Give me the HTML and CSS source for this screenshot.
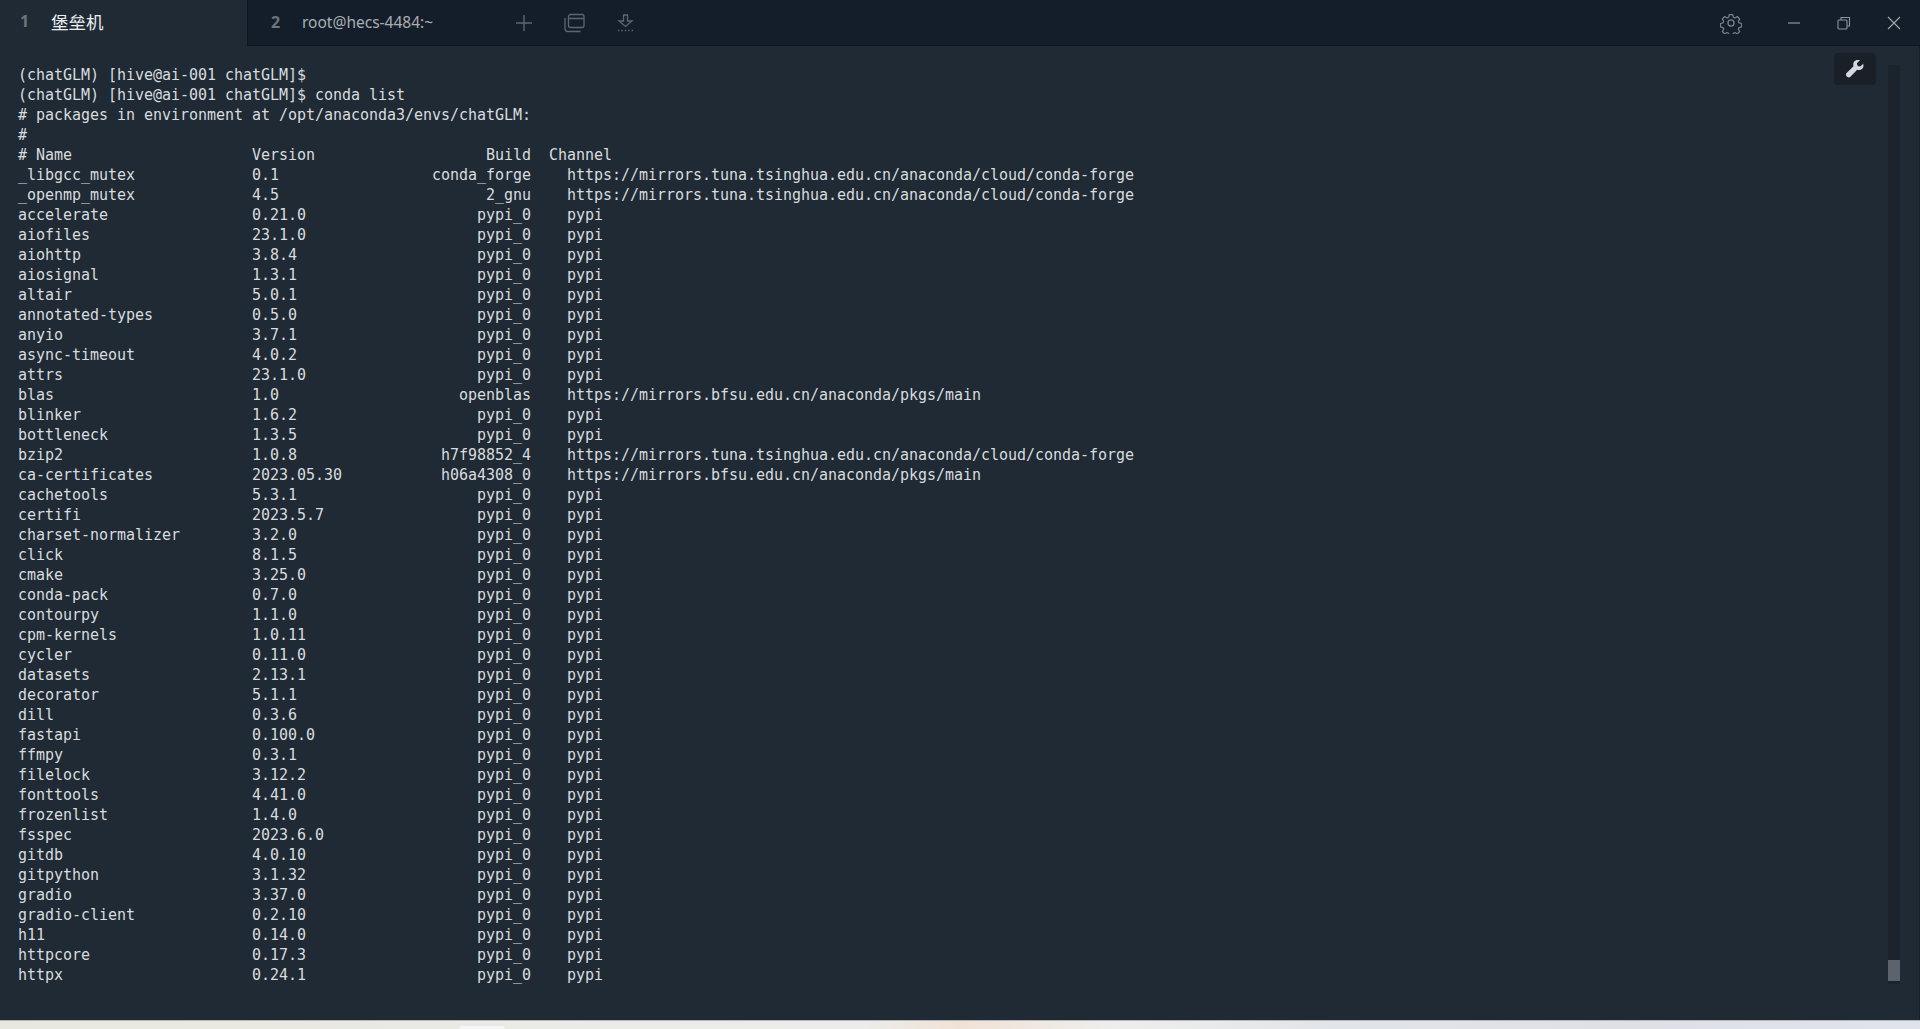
FILE: index.html
```html
<!DOCTYPE html>
<html lang="zh-CN">
<head>
    <meta charset="UTF-8">
    <title>堡垒机</title>
    <link rel="stylesheet" href="styles.css">
</head>
<body>
    <header class="tabbar">
        <div class="tab active"><span class="tab-num">1</span><span class="tab-name">堡垒机</span></div>
        <div class="tab"><span class="tab-num">2</span><span class="tab-name">root@hecs-4484:~</span></div>
        <div class="tab-tools">
            <svg width="18" height="18" viewBox="0 0 18 18" fill="none" stroke="#5d656e" stroke-width="1.4"><path d="M9 1v16M1 9h16"/></svg>
            <svg width="22" height="20" viewBox="0 0 22 20" fill="none" stroke="#5d656e" stroke-width="1.3"><rect x="4.500" y="1.500" width="15.500" height="13" rx="2"/><path d="M4.500 5.500H20M1 5v10.500a3 3 0 0 0 3 3h12.500"/></svg>
            <svg width="18" height="20" viewBox="0 0 18 20" fill="none" stroke="#5d656e" stroke-width="1.3"><path d="M6.500 2h4v6h4.500l-6.500 5.500L2 8h4.500z"/><path d="M1 17.500h15" stroke-width="1.400" stroke-dasharray="1.400 2"/></svg>
        </div>
        <div class="window-tools">
            <svg class="gear" width="22" height="22" viewBox="0 0 24 24" fill="none" stroke="#7b8289" stroke-width="1.400" stroke-linejoin="round"><circle cx="12" cy="12" r="3.300"/><path d="M10 1.500h4l.7 3 1.900.8 2.600-1.600 2.800 2.800-1.600 2.600.8 1.900 3 .7v4l-3 .7-.8 1.900 1.600 2.600-2.800 2.800-2.600-1.600-1.900.8-.7 3h-4l-.7-3-1.900-.8-2.600 1.600-2.800-2.800 1.600-2.600-.8-1.900-3-.7v-4l3-.7.8-1.900-1.600-2.600 2.800-2.800 2.600 1.600 1.900-.8z" transform="translate(.6 1.400) scale(.95)"/></svg>
            <svg width="14" height="14" viewBox="0 0 14 14" fill="none" stroke="#8d9399" stroke-width="1.200"><path d="M1 7h12"/></svg>
            <svg width="14" height="14" viewBox="0 0 14 14" fill="none" stroke="#8d9399" stroke-width="1.100"><rect x="1" y="4" width="9" height="9" rx="1"/><path d="M4 4V1.500h8.500V10H10"/></svg>
            <svg width="14" height="14" viewBox="0 0 14 14" fill="none" stroke="#a3a8ad" stroke-width="1.100"><path d="M1 1l12 12M13 1L1 13"/></svg>
        </div>
    </header>

    <main class="terminal">
        <pre class="output">(chatGLM) [hive@ai-001 chatGLM]$
(chatGLM) [hive@ai-001 chatGLM]$ conda list
# packages in environment at /opt/anaconda3/envs/chatGLM:
#
# Name                    Version                   Build  Channel
_libgcc_mutex             0.1                 conda_forge    https://mirrors.tuna.tsinghua.edu.cn/anaconda/cloud/conda-forge
_openmp_mutex             4.5                       2_gnu    https://mirrors.tuna.tsinghua.edu.cn/anaconda/cloud/conda-forge
accelerate                0.21.0                   pypi_0    pypi
aiofiles                  23.1.0                   pypi_0    pypi
aiohttp                   3.8.4                    pypi_0    pypi
aiosignal                 1.3.1                    pypi_0    pypi
altair                    5.0.1                    pypi_0    pypi
annotated-types           0.5.0                    pypi_0    pypi
anyio                     3.7.1                    pypi_0    pypi
async-timeout             4.0.2                    pypi_0    pypi
attrs                     23.1.0                   pypi_0    pypi
blas                      1.0                    openblas    https://mirrors.bfsu.edu.cn/anaconda/pkgs/main
blinker                   1.6.2                    pypi_0    pypi
bottleneck                1.3.5                    pypi_0    pypi
bzip2                     1.0.8                h7f98852_4    https://mirrors.tuna.tsinghua.edu.cn/anaconda/cloud/conda-forge
ca-certificates           2023.05.30           h06a4308_0    https://mirrors.bfsu.edu.cn/anaconda/pkgs/main
cachetools                5.3.1                    pypi_0    pypi
certifi                   2023.5.7                 pypi_0    pypi
charset-normalizer        3.2.0                    pypi_0    pypi
click                     8.1.5                    pypi_0    pypi
cmake                     3.25.0                   pypi_0    pypi
conda-pack                0.7.0                    pypi_0    pypi
contourpy                 1.1.0                    pypi_0    pypi
cpm-kernels               1.0.11                   pypi_0    pypi
cycler                    0.11.0                   pypi_0    pypi
datasets                  2.13.1                   pypi_0    pypi
decorator                 5.1.1                    pypi_0    pypi
dill                      0.3.6                    pypi_0    pypi
fastapi                   0.100.0                  pypi_0    pypi
ffmpy                     0.3.1                    pypi_0    pypi
filelock                  3.12.2                   pypi_0    pypi
fonttools                 4.41.0                   pypi_0    pypi
frozenlist                1.4.0                    pypi_0    pypi
fsspec                    2023.6.0                 pypi_0    pypi
gitdb                     4.0.10                   pypi_0    pypi
gitpython                 3.1.32                   pypi_0    pypi
gradio                    3.37.0                   pypi_0    pypi
gradio-client             0.2.10                   pypi_0    pypi
h11                       0.14.0                   pypi_0    pypi
httpcore                  0.17.3                   pypi_0    pypi
httpx                     0.24.1                   pypi_0    pypi</pre>
        <button class="wrench">
            <svg width="20" height="20" viewBox="0 0 20 20"><path fill="#d5d9de" d="M18.500 4.500l-3.200 3-2.700-.6-.7-2.700 3.100-3C12.800.5 10.800 1 9.500 2.300 8.200 3.600 8 5.500 8.500 7.200L1.600 14c-.9.900-.9 2.300 0 3.200l.6.500c.9.900 2.300.9 3.200 0l6.800-6.900c1.700.6 3.700.3 5-1 1.300-1.300 1.700-3.500.8-5.300z"/></svg>
        </button>
        <div class="scrollbar"><div class="scrollbar-thumb"></div></div>
    </main>
    <footer class="desktop-strip"><div class="strip-notch"></div></footer>
</body>
</html>
```

FILE: styles.css
```css
html, body {
    height: 100%;
    overflow: hidden;
}
body {
    margin: 0;
    display: flex;
    flex-direction: column;
    background: #1f2a35;
    font-family: 'Noto Sans', 'Noto Sans CJK SC', sans-serif;
}
.tabbar {
    display: flex;
    align-items: stretch;
    height: 46px;
    box-sizing: border-box;
    flex-shrink: 0;
    background: #141e2a;
    border-bottom: 1px solid #0e151d;
}
.tab {
    width: 248px;
    display: flex;
    align-items: center;
    padding: 0 0 2px 23px;
    box-sizing: border-box;
    color: #a9aeb3;
    font-size: 15.500px;
}
.tab.active {
    padding: 0 0 4px 20px;
    background: #1f2a35;
    color: #eceef0;
    margin-bottom: -1px;
    font-size: 17.500px;
    border-right: 1px solid #0e151d;
}
.tab-num {
    width: 31px;
    font-size: 16px;
    font-weight: bold;
    color: #6d747b;
}
.tab-tools {
    display: flex;
    align-items: center;
    gap: 31px;
    margin-left: 19px;
}
.window-tools {
    margin-left: auto;
    display: flex;
    align-items: center;
    gap: 36px;
    padding-right: 19px;
}
.gear {
    margin-right: 9px;
}
.terminal {
    flex: 1;
    position: relative;
    padding: 19px 0 0 18px;
    border-right: 1px solid #171f28;
}
.output {
    margin: 0;
    font-family: 'DejaVu Sans Mono', monospace;
    font-size: 15px;
    letter-spacing: -0.03px;
    line-height: 20px;
    color: #d9dcdf;
}
.wrench {
    position: absolute;
    top: 7px;
    right: 43px;
    width: 42px;
    height: 32px;
    display: flex;
    align-items: center;
    justify-content: center;
    padding: 0;
    border: none;
    border-radius: 4px;
    background: #1a2028;
}
.scrollbar {
    position: absolute;
    top: 19px;
    right: 19px;
    width: 12px;
    height: 919px;
    background: #1b242d;
}
.scrollbar-thumb {
    position: absolute;
    bottom: 3px;
    left: 0;
    width: 100%;
    height: 21px;
    background: #5b646c;
}
.desktop-strip {
    position: relative;
    height: 9px;
    box-sizing: border-box;
    flex-shrink: 0;
    border-top: 1px solid #b5b8bb;
    background: linear-gradient(90deg, #e8e8df 0%, #ececea 45%, #f1e2d6 50%, #eeeeec 58%, #e1e4e8 70%, #dfe0e6 85%, #dfe3ec 100%);
}
.strip-notch {
    position: absolute;
    bottom: 0;
    left: 459px;
    width: 46px;
    height: 3px;
    border-radius: 3px 3px 0 0;
    background: #f6f6f4;
}
```
